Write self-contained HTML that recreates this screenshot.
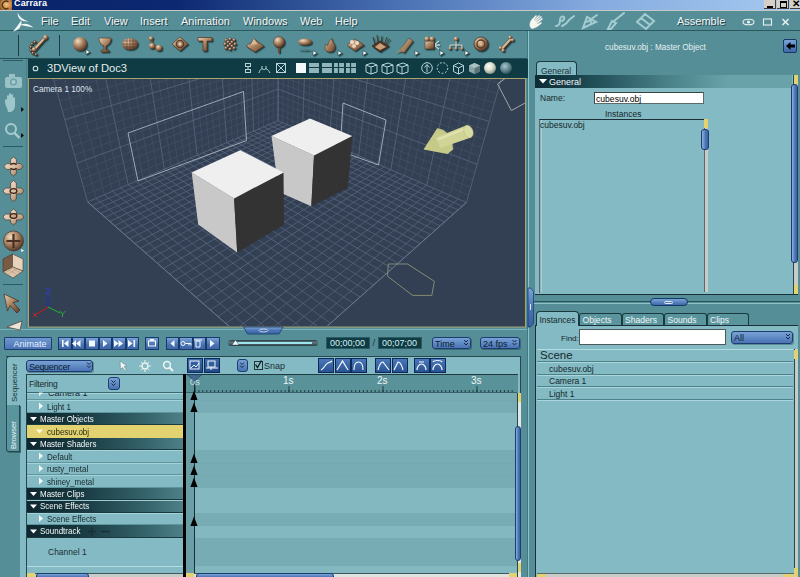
<!DOCTYPE html><html><head><meta charset="utf-8"><style>*{margin:0;padding:0;box-sizing:border-box}
html,body{width:800px;height:577px;overflow:hidden;background:#558e97;font-family:"Liberation Sans",sans-serif}
.a{position:absolute}
.t{position:absolute;white-space:nowrap;line-height:1}
.menu{font-size:11px;color:#f2f6f6;text-shadow:1px 1px 0 #24444a}
.bb{position:absolute;background:linear-gradient(#7ea6d8,#4a74b4 55%,#3d65a6);border:1px solid #163868;border-radius:2px}
.dd{position:absolute;background:linear-gradient(#6f98d0,#4c76b6);border:1px solid #1d3d70;border-radius:3px;box-shadow:1px 1px 0 #2b5a62}
.sm{font-size:8.5px;color:#16282c}
svg{position:absolute;left:0;top:0;overflow:visible}
</style></head><body>
<div class="a" style="left:0px;top:0px;width:800px;height:10px;background:linear-gradient(90deg,#0a246a 0%,#0c2870 22%,#4a72b4 50%,#86ace0 75%,#a6caf0 100%)"></div>
<div class="a" style="left:0px;top:0px;width:12px;height:10px;background:radial-gradient(circle at 55% 45%,#f4c27a,#c08040 60%,#6a4a2a)"></div>
<div class="a" style="left:764px;top:0px;width:12px;height:9px;background:#d4d0c8;border-right:1px solid #404040;border-bottom:1px solid #404040"></div>
<div class="a" style="left:777px;top:0px;width:12px;height:9px;background:#d4d0c8;border-right:1px solid #404040;border-bottom:1px solid #404040"></div>
<div class="a" style="left:790px;top:0px;width:12px;height:9px;background:#d4d0c8;border-right:1px solid #404040;border-bottom:1px solid #404040"></div>
<div class="a" style="left:0px;top:9.5px;width:800px;height:1.8px;background:#c4c8c8"></div>
<div class="a" style="left:0px;top:30px;width:800px;height:1px;background:#2b5960"></div>
<div class="a" style="left:0px;top:58px;width:527px;height:1px;background:#24525a"></div>
<div class="a" style="left:18px;top:35px;width:1px;height:21px;background:#1e3c42"></div>
<div class="a" style="left:59px;top:35px;width:1px;height:21px;background:#1e3c42"></div>
<div class="a" style="left:527px;top:31px;width:1px;height:546px;background:#3f7a82"></div>
<div class="a" style="left:528px;top:31px;width:1px;height:546px;background:#8cc4cc"></div>
<div class="a" style="left:26px;top:59px;width:1px;height:270px;background:#4a8088"></div>
<div class="a" style="left:3px;top:60px;width:20px;height:1px;background:#2a5a62"></div>
<div class="a" style="left:3px;top:146px;width:20px;height:1px;background:#2a5a62"></div>
<div class="a" style="left:3px;top:284px;width:20px;height:1px;background:#2a5a62"></div>
<div class="a" style="left:28px;top:59px;width:500px;height:19px;background:#0e3b44"></div>
<div class="a" style="left:0px;top:328.5px;width:527px;height:1px;background:#7ab4bc"></div>
<div class="a" style="left:6px;top:356px;width:515px;height:221px;background:#84bac3;border-top:1px solid #24484e;border-right:1.5px solid #24484e"></div>
<div class="a" style="left:6px;top:405px;width:13.5px;height:172px;background:#558e97"></div>
<div class="a" style="left:6px;top:356px;width:20px;height:49px;background:#84bac3;border:1px solid #24484e;border-right:none;border-bottom:none;border-radius:4px 0 0 0"></div>
<div class="a" style="left:6px;top:405px;width:13.5px;height:47px;background:#5a959e;border:1px solid #24484e;border-top:none;border-radius:0 0 0 3px;box-shadow:1px 1px 0 #3a6a70"></div>
<div class="a" style="left:26px;top:374px;width:157px;height:203px;background:#84bac3;border-left:1px solid #24484e;border-top:1px solid #24484e"></div>
<div class="a" style="left:27px;top:392px;width:156px;height:1px;background:#3a6a72"></div>
<div class="a" style="left:27px;top:392.5px;width:156px;height:7.5px;background:#84bac3;border-bottom:1px solid #5e949c;border-top:1px solid #a4d4da"></div>
<div class="a" style="left:27px;top:400px;width:156px;height:12.5px;background:#84bac3;border-bottom:1px solid #5e949c;border-top:1px solid #a4d4da"></div>
<div class="a" style="left:27px;top:412.5px;width:156px;height:12.5px;background:linear-gradient(90deg,#0e2830 0%,#15353d 30%,#34626a 75%,#4e8088 100%);border-bottom:1px solid #1a3a40"></div>
<div class="a" style="left:27px;top:425px;width:156px;height:12.5px;background:#e2d270"></div>
<div class="a" style="left:27px;top:437.5px;width:156px;height:12.5px;background:linear-gradient(90deg,#0e2830 0%,#15353d 30%,#34626a 75%,#4e8088 100%);border-bottom:1px solid #1a3a40"></div>
<div class="a" style="left:27px;top:450px;width:156px;height:12.5px;background:#84bac3;border-bottom:1px solid #5e949c;border-top:1px solid #a4d4da"></div>
<div class="a" style="left:27px;top:462.5px;width:156px;height:12.5px;background:#84bac3;border-bottom:1px solid #5e949c;border-top:1px solid #a4d4da"></div>
<div class="a" style="left:27px;top:475px;width:156px;height:12.5px;background:#84bac3;border-bottom:1px solid #5e949c;border-top:1px solid #a4d4da"></div>
<div class="a" style="left:27px;top:487.5px;width:156px;height:12.5px;background:linear-gradient(90deg,#0e2830 0%,#15353d 30%,#34626a 75%,#4e8088 100%);border-bottom:1px solid #1a3a40"></div>
<div class="a" style="left:27px;top:500px;width:156px;height:12.5px;background:linear-gradient(90deg,#0e2830 0%,#15353d 30%,#34626a 75%,#4e8088 100%);border-bottom:1px solid #1a3a40"></div>
<div class="a" style="left:27px;top:512.5px;width:156px;height:12.5px;background:#84bac3;border-bottom:1px solid #5e949c;border-top:1px solid #a4d4da"></div>
<div class="a" style="left:27px;top:525px;width:156px;height:12.5px;background:linear-gradient(90deg,#0e2830 0%,#15353d 30%,#34626a 75%,#4e8088 100%);border-bottom:1px solid #1a3a40"></div>
<div class="a" style="left:27px;top:392px;width:156px;height:1px;background:#3a6a72"></div>
<div class="a" style="left:27px;top:500px;width:156px;height:1px;background:#9ccad0"></div>
<div class="a" style="left:27px;top:566px;width:156px;height:1px;background:#b0dce2"></div>
<div class="a" style="left:27px;top:572.5px;width:156px;height:4.5px;background:#c8ccc8;border-top:1px solid #3a5a60"></div>
<div class="a" style="left:27px;top:573px;width:8px;height:4px;background:#e2d270"></div>
<div class="a" style="left:183px;top:374px;width:3px;height:203px;background:#000"></div>
<div class="a" style="left:186px;top:374px;width:332px;height:19px;background:#5a9299;border-top:1.5px solid #1e3a40"></div>
<div class="a" style="left:186px;top:393px;width:331px;height:19.5px;background:#77acb5"></div>
<div class="a" style="left:186px;top:412.5px;width:331px;height:37.5px;background:#83b8c1"></div>
<div class="a" style="left:186px;top:450px;width:331px;height:37.5px;background:#77acb5"></div>
<div class="a" style="left:186px;top:487.5px;width:331px;height:25.5px;background:#83b8c1"></div>
<div class="a" style="left:186px;top:513px;width:331px;height:13px;background:#77acb5"></div>
<div class="a" style="left:186px;top:526px;width:331px;height:11.5px;background:#83b8c1"></div>
<div class="a" style="left:186px;top:537.5px;width:331px;height:28.0px;background:#77acb5"></div>
<div class="a" style="left:186px;top:565.5px;width:331px;height:7.0px;background:#83b8c1"></div>
<div class="a" style="left:186px;top:400px;width:331px;height:1px;background:#74a8b0"></div>
<div class="a" style="left:186px;top:462.5px;width:331px;height:1px;background:#74a8b0"></div>
<div class="a" style="left:186px;top:475px;width:331px;height:1px;background:#74a8b0"></div>
<div class="a" style="left:186px;top:393px;width:8.5px;height:180px;background:#6a9fa7"></div>
<div class="a" style="left:193.5px;top:380px;width:1.2px;height:193px;background:#1a3034"></div>
<div class="a" style="left:517px;top:393px;width:4px;height:184px;background:#e4e8e4;border-left:1px solid #24484e"></div>
<div class="a" style="left:517.5px;top:393px;width:3.5px;height:9px;background:#e2d270"></div>
<div class="a" style="left:517.5px;top:563px;width:3.5px;height:9px;background:#e2d270"></div>
<div class="a" style="left:186px;top:572.5px;width:331px;height:4.5px;background:#dfe3df;border-top:1px solid #3a5a60"></div>
<div class="a" style="left:186px;top:573px;width:8px;height:4px;background:#e2d270"></div>
<div class="a" style="left:509px;top:573px;width:8px;height:4px;background:#e2d270"></div>
<div class="a" style="left:535.5px;top:61px;width:41.5px;height:15px;background:#84bac3;border:1px solid #1a3a40;border-bottom:none;border-radius:4px 4px 0 0"></div>
<div class="a" style="left:535px;top:75px;width:263px;height:220px;background:#84bac3;border-bottom:1.5px solid #1a3036"></div>
<div class="a" style="left:535px;top:75px;width:257px;height:13px;background:linear-gradient(90deg,#0e2c34 0%,#16404a 15%,#4e868e 55%,#6aa2aa 75%,#6aa2aa 100%)"></div>
<div class="a" style="left:594px;top:92px;width:110px;height:12px;background:#fff;border:1px solid #5a6a6a;border-top-color:#3a4444;border-left-color:#3a4444"></div>
<div class="a" style="left:539px;top:119px;width:169px;height:174px;border-left:1.5px solid #5a6a6a;border-top:1.5px solid #1a3036"></div>
<div class="a" style="left:540.5px;top:120px;width:1px;height:172px;background:#b8c8c8"></div>
<div class="a" style="left:703.5px;top:119px;width:4.5px;height:173px;background:#c8ccc8;border-left:1px solid #5a6a6a"></div>
<div class="a" style="left:703.5px;top:119px;width:4.5px;height:9px;background:#e2d270"></div>
<div class="a" style="left:793px;top:75px;width:5px;height:219px;background:#c8ccc8;border-left:1px solid #24484e"></div>
<div class="a" style="left:793.5px;top:75px;width:4.5px;height:9px;background:#e2d270"></div>
<div class="a" style="left:793.5px;top:285px;width:4.5px;height:8.5px;background:#e2d270"></div>
<div class="a" style="left:529px;top:301px;width:271px;height:1px;background:#2a5058"></div>
<div class="a" style="left:529px;top:302.5px;width:271px;height:1px;background:#8cc2ca"></div>
<div class="a" style="left:579px;top:312.5px;width:42.5px;height:13px;background:#5a959e;border:1px solid #1a3a40;border-bottom:none;border-radius:3px 3px 0 0"></div>
<div class="a" style="left:621.5px;top:312.5px;width:42.5px;height:13px;background:#5a959e;border:1px solid #1a3a40;border-bottom:none;border-radius:3px 3px 0 0"></div>
<div class="a" style="left:664px;top:312.5px;width:42.5px;height:13px;background:#5a959e;border:1px solid #1a3a40;border-bottom:none;border-radius:3px 3px 0 0"></div>
<div class="a" style="left:706.5px;top:312.5px;width:42.5px;height:13px;background:#5a959e;border:1px solid #1a3a40;border-bottom:none;border-radius:3px 3px 0 0"></div>
<div class="a" style="left:535px;top:325px;width:263px;height:252px;background:#84bac3;border-left:1.5px solid #1a3036;border-top:1px solid #1a3036"></div>
<div class="a" style="left:535.5px;top:311px;width:43px;height:15px;background:#84bac3;border:1px solid #1a3a40;border-bottom:none;border-radius:4px 4px 0 0"></div>
<div class="a" style="left:579px;top:329px;width:146.5px;height:15.5px;background:#fff;border:1px solid #4a5a5a"></div>
<div class="a" style="left:536.5px;top:349px;width:256px;height:1px;background:#b0dce2"></div>
<div class="a" style="left:536.5px;top:350px;width:256px;height:12px;border-bottom:1px solid #4e8088;box-shadow:0 1px 0 #a8d6dc"></div>
<div class="a" style="left:536.5px;top:362px;width:256px;height:12.5px;border-bottom:1px solid #4e8088;box-shadow:0 1px 0 #a8d6dc"></div>
<div class="a" style="left:536.5px;top:374.5px;width:256px;height:12.5px;border-bottom:1px solid #4e8088;box-shadow:0 1px 0 #a8d6dc"></div>
<div class="a" style="left:536.5px;top:387px;width:256px;height:12.5px;border-bottom:1px solid #4e8088;box-shadow:0 1px 0 #a8d6dc"></div>
<div class="a" style="left:793.5px;top:349px;width:4.5px;height:228px;background:#c8ccc8;border-left:1px solid #24484e"></div>
<div class="a" style="left:793.5px;top:350px;width:4.5px;height:8.5px;background:#e2d270"></div>
<div class="a" style="left:793.5px;top:568px;width:4.5px;height:9px;background:#e2d270"></div>
<div class="a" style="left:536.5px;top:573px;width:257px;height:4px;background:#c8ccc8;border-top:1px solid #5a6a6a"></div>
<div class="a" style="left:536.5px;top:573.5px;width:9px;height:3.5px;background:#e2d270"></div>
<div class="a" style="left:783px;top:573.5px;width:10px;height:3.5px;background:#e2d270"></div>
<svg width="800" height="577" viewBox="0 0 800 577"><defs>
<radialGradient id="tan" cx="35%" cy="30%" r="75%"><stop offset="0" stop-color="#f0dcc4"/><stop offset="0.45" stop-color="#b08866"/><stop offset="1" stop-color="#4e3222"/></radialGradient>
<linearGradient id="tanl" x1="0" y1="0" x2="1" y2="1"><stop offset="0" stop-color="#e8d0b4"/><stop offset="0.5" stop-color="#a8805e"/><stop offset="1" stop-color="#5a3c28"/></linearGradient>
<radialGradient id="pearl" cx="40%" cy="35%" r="70%"><stop offset="0" stop-color="#ffffff"/><stop offset="0.5" stop-color="#d8dcc8"/><stop offset="1" stop-color="#7a8a80"/></radialGradient>
<radialGradient id="blueb" cx="40%" cy="35%" r="70%"><stop offset="0" stop-color="#a8c4cc"/><stop offset="0.6" stop-color="#5a8088"/><stop offset="1" stop-color="#2a4a52"/></radialGradient>
<linearGradient id="btn" x1="0" y1="0" x2="0" y2="1"><stop offset="0" stop-color="#7ea6d8"/><stop offset="0.5" stop-color="#4a74b4"/><stop offset="1" stop-color="#3a62a2"/></linearGradient>
<linearGradient id="hdr" x1="0" y1="0" x2="1" y2="0"><stop offset="0" stop-color="#0f2f38"/><stop offset="0.25" stop-color="#163e48"/><stop offset="0.75" stop-color="#5e949c"/><stop offset="1" stop-color="#6aa2aa"/></linearGradient>
</defs><filter id="ds" x="-30%" y="-30%" width="160%" height="160%"><feDropShadow dx="1.2" dy="1.2" stdDeviation="0.7" flood-color="#102024" flood-opacity="0.75"/></filter><g filter="url(#ds)"><g stroke="#3a2a20" stroke-width="0.5"><circle cx="35.9" cy="54.4" r="1.3" fill="url(#tan)"/><circle cx="32.8" cy="53.0" r="1.3" fill="url(#tan)"/><circle cx="30.9" cy="50.2" r="1.3" fill="url(#tan)"/><circle cx="30.6" cy="46.9" r="1.3" fill="url(#tan)"/><circle cx="32.0" cy="43.8" r="1.3" fill="url(#tan)"/><circle cx="34.8" cy="41.9" r="1.3" fill="url(#tan)"/></g><path d="M35 49L44 39" stroke="#4a3020" stroke-width="3.6" stroke-linecap="round"/><path d="M35 48.5L44 38.5" stroke="#d8b898" stroke-width="2.4" stroke-linecap="round"/><circle cx="45.5" cy="37.5" r="2.4" fill="url(#tan)"/><circle cx="34" cy="49.5" r="2.2" fill="url(#tan)"/><circle cx="80" cy="44" r="7" fill="url(#tan)"/><path d="M86 49.5L90 52L86 54.5Z" fill="#fff" stroke="#1a3a40" stroke-width="0.6"/><path d="M99 38h12c0 5-3 7-5 8v4h3v2h-8v-2h3v-4c-2-1-5-3-5-8z" fill="url(#tanl)" stroke="#4a3020" stroke-width="0.6"/><ellipse cx="130" cy="44" rx="8" ry="6" fill="url(#tan)"/><path d="M122 44h16M123.5 41h13M123.5 47h13M127 38.5v11M130 38v12M133 38.5v11" stroke="#5a3a28" stroke-width="0.6"/><path d="M151 38L152 46L158 48" stroke="#7a5a40" stroke-width="2.2" fill="none"/><circle cx="151" cy="38.5" r="2.2" fill="url(#tan)"/><circle cx="152" cy="46" r="3" fill="url(#tan)"/><circle cx="159" cy="48" r="3.2" fill="url(#tan)"/><path d="M172 44L180 37L188 44L180 51Z" fill="url(#tanl)" stroke="#4a3020" stroke-width="0.6"/><circle cx="180" cy="44" r="3.6" fill="none" stroke="#5a3a28" stroke-width="1.4"/><circle cx="180" cy="44" r="1.5" fill="#e8d0b8"/><path d="M198 37.5h14v3.5h-5v10h-4v-10h-5z" fill="url(#tanl)" stroke="#4a3020" stroke-width="0.7"/><circle cx="230" cy="44" r="1.5" fill="url(#tan)" stroke="#4a3020" stroke-width="0.3"/><circle cx="226" cy="40" r="1.5" fill="url(#tan)" stroke="#4a3020" stroke-width="0.3"/><circle cx="230" cy="39" r="1.5" fill="url(#tan)" stroke="#4a3020" stroke-width="0.3"/><circle cx="234" cy="40" r="1.5" fill="url(#tan)" stroke="#4a3020" stroke-width="0.3"/><circle cx="225" cy="44" r="1.5" fill="url(#tan)" stroke="#4a3020" stroke-width="0.3"/><circle cx="235" cy="44" r="1.5" fill="url(#tan)" stroke="#4a3020" stroke-width="0.3"/><circle cx="226" cy="48" r="1.5" fill="url(#tan)" stroke="#4a3020" stroke-width="0.3"/><circle cx="230" cy="49" r="1.5" fill="url(#tan)" stroke="#4a3020" stroke-width="0.3"/><circle cx="234" cy="48" r="1.5" fill="url(#tan)" stroke="#4a3020" stroke-width="0.3"/><circle cx="228" cy="42" r="1.5" fill="url(#tan)" stroke="#4a3020" stroke-width="0.3"/><circle cx="232" cy="46" r="1.5" fill="url(#tan)" stroke="#4a3020" stroke-width="0.3"/><circle cx="232" cy="42" r="1.5" fill="url(#tan)" stroke="#4a3020" stroke-width="0.3"/><circle cx="228" cy="46" r="1.5" fill="url(#tan)" stroke="#4a3020" stroke-width="0.3"/><path d="M246 46L255 40L264 46L255 52Z" fill="url(#tanl)" stroke="#4a3020" stroke-width="0.6"/><path d="M250 45L254 38L258 44" fill="#d8b898" stroke="#5a3a28" stroke-width="0.5"/><path d="M279 46v7" stroke="#6a4a34" stroke-width="2"/><circle cx="279" cy="42" r="5.5" fill="url(#tan)" stroke="#4a3020" stroke-width="0.5"/><ellipse cx="305" cy="42" rx="7" ry="3.5" fill="url(#tan)"/><ellipse cx="305" cy="50" rx="6" ry="1.2" fill="#4a7a80" opacity="0.7"/><path d="M313 50.5L317 53L313 55.5Z" fill="#fff" stroke="#1a3a40" stroke-width="0.6"/><path d="M330 52c-5 0-6-4-4-8c1 2 2 2 2 1c0-3 2-5 4-7c-1 3 3 5 3 9c0 3-2 5-5 5z" fill="url(#tanl)" stroke="#4a3020" stroke-width="0.5"/><path d="M338 50.5L342 53L338 55.5Z" fill="#fff" stroke="#1a3a40" stroke-width="0.6"/><path d="M347 45L355 39L364 45L355 51Z" fill="url(#tanl)" stroke="#4a3020" stroke-width="0.6"/><circle cx="352" cy="42" r="2" fill="#f0dcc4"/><circle cx="357" cy="43" r="2" fill="#f0dcc4"/><circle cx="354" cy="46" r="2" fill="#e8d0b8"/><path d="M363 50.5L367 53L363 55.5Z" fill="#fff" stroke="#1a3a40" stroke-width="0.6"/><path d="M372 46L380 41L389 46L380 52Z" fill="#5a3a28" stroke="#2a1a10" stroke-width="0.6"/><path d="M375 45l-2-8M378 44l-1-9M381 44l1-8M384 45l3-8M386 45l4-6" stroke="#3a2a20" stroke-width="0.8"/><path d="M375 47L380 43L386 47L380 50Z" fill="#c9a07e"/><path d="M400 50L409 38L413 41L404 53Z" fill="url(#tanl)" stroke="#4a3020" stroke-width="0.5"/><path d="M396 53L403 46L405 51Z" fill="#a88868" opacity="0.7"/><path d="M415 50.5L419 53L415 55.5Z" fill="#fff" stroke="#1a3a40" stroke-width="0.6"/><rect x="425" y="41" width="9" height="8" fill="url(#tanl)" stroke="#4a3020" stroke-width="0.5"/><circle cx="427" cy="39" r="2.5" fill="url(#tan)"/><circle cx="432" cy="39" r="2.5" fill="url(#tan)"/><path d="M435 44l4-3M435 45h5M435 46l4 3" stroke="#fff" stroke-width="0.8"/><path d="M440 50.5L444 53L440 55.5Z" fill="#fff" stroke="#1a3a40" stroke-width="0.6"/><circle cx="456" cy="39" r="2.3" fill="url(#tan)"/><path d="M456 41v4M450 45h12M450 45v3M456 45v3M462 45v3" stroke="#e8d8c8" stroke-width="0.8"/><circle cx="450" cy="48.5" r="1.5" fill="url(#tan)"/><circle cx="456" cy="48.5" r="1.5" fill="url(#tan)"/><circle cx="462" cy="48.5" r="1.5" fill="url(#tan)"/><path d="M465 50.5L469 53L465 55.5Z" fill="#fff" stroke="#1a3a40" stroke-width="0.6"/><circle cx="481" cy="44" r="7" fill="url(#tan)" stroke="#3a2a20" stroke-width="0.6"/><circle cx="481" cy="44" r="4" fill="none" stroke="#5a3a28" stroke-width="1.4"/><circle cx="481" cy="44" r="1.6" fill="#d8b898"/><path d="M502 49L511 39" stroke="#4a3020" stroke-width="3.4" stroke-linecap="round"/><path d="M502 48.5L511 38.5" stroke="#d8b898" stroke-width="2.2"/><circle cx="510" cy="37.5" r="1.8" fill="url(#tan)"/><circle cx="512.5" cy="40" r="1.8" fill="url(#tan)"/><circle cx="500.5" cy="48" r="1.8" fill="url(#tan)"/><circle cx="503" cy="50.5" r="1.8" fill="url(#tan)"/></g><path d="M8.5 2A3.8 3.8 0 1 0 8.5 8" fill="none" stroke="#4a3018" stroke-width="1.3"/><g fill="#eef6f6"><path d="M17.5 12.5Q17 22 28.5 21.5Q20.5 19 17.5 12.5Z"/><path d="M13 31.5Q22.5 29.5 21.5 20Q17.5 26 13 31.5Z"/><path d="M33.5 27.5Q26.5 21.5 20 25Q27 26 33.5 27.5Z"/></g><path d="M530 27c-1-3 0-6 2-8l4-4 1 1-3 4 5-5 1 1-5 5 6-5 1 1-6 5 6-4 1 1-6 5 4-2 1 1c-3 3-6 5-10 6z" fill="#f8f8ee" stroke="#9ab" stroke-width="0.3"/><g fill="none" stroke="#a8d0d4" stroke-width="2" stroke-linecap="round" opacity="0.95"><path d="M556 26c3 0 4-3 4-6c0-3 2-4 4-3c1 1 0 3-2 4M562 26c3-1 5-3 7-6l5-4"/><path d="M583 28l4-11l9 5zM587 22l10-7M590 19l1 4"/><path d="M608 29l4-8l4 2-5 6zM614 21l10-8"/><path d="M637 22l8-8l9 7-8 8zM641 18l9 7M645 14l9 7"/></g><ellipse cx="748.5" cy="22" rx="5.5" ry="2.8" fill="none" stroke="#e8f0f0" stroke-width="1.1"/><circle cx="748.5" cy="22" r="1.6" fill="#e8f0f0"/><rect x="763.5" y="19" width="8" height="6" fill="none" stroke="#e8f0f0" stroke-width="1.1"/><path d="M782.5 19l6 6M788.5 19l-6 6" stroke="#e8f0f0" stroke-width="1.5"/><g fill="#a6ccd0" opacity="0.85"><rect x="5" y="77" width="17" height="11" rx="2"/><rect x="9" y="74" width="6" height="4"/></g><circle cx="13.5" cy="82" r="3.6" fill="#6aa2aa"/><circle cx="13.5" cy="82" r="2" fill="#a6ccd0"/><path d="M7 108c-2-3-2-6-2-8 0-1 2-1 2 0v3l0-7c0-1 2-1 2 0v6-8c0-1 2-1 2 0v8-7c0-1 2-1 2 0v8-5c0-1 2-1 2 0v8c0 3-2 5-4 6h-3z" fill="#a6ccd0" opacity="0.9"/><path d="M21 107l3 2.5-3 2.5z" fill="#111"/><circle cx="11" cy="129" r="5" fill="none" stroke="#a6ccd0" stroke-width="2"/><path d="M14.5 133l5 5" stroke="#a6ccd0" stroke-width="2.4"/><path d="M21 133l3 2.5-3 2.5z" fill="#111"/><linearGradient id="tanl2" x1="0" y1="0" x2="1" y2="1"><stop offset="0" stop-color="#f4e4d0"/><stop offset="0.55" stop-color="#d8bca0"/><stop offset="1" stop-color="#7a5a40"/></linearGradient><path d="M10.6 163.6L10.6 159.5L13.5 157.0L16.4 159.5L16.4 163.6L20.5 163.6L23.0 166.5L20.5 169.4L16.4 169.4L16.4 173.5L13.5 176.0L10.6 173.5L10.6 169.4L6.5 169.4L4.0 166.5L6.5 163.6Z" fill="url(#tanl2)" stroke="#3a2a20" stroke-width="0.6"/><path d="M10.5 165c1-2 5-2 6 0M10.5 168c1 2 5 2 6 0" stroke="#3a2418" stroke-width="1.3" fill="none"/><path d="M10.6 188.1L10.6 183.0L13.5 180.5L16.4 183.0L16.4 188.1L21.5 188.1L24.0 191L21.5 193.9L16.4 193.9L16.4 199.0L13.5 201.5L10.6 199.0L10.6 193.9L5.5 193.9L3.0 191L5.5 188.1Z" fill="url(#tanl2)" stroke="#3a2a20" stroke-width="0.6"/><ellipse cx="13.5" cy="191" rx="3.4" ry="2.3" fill="none" stroke="#3a2418" stroke-width="1.3"/><path d="M10.6 214.1L10.6 211.5L13.5 209L16.4 211.5L16.4 214.1L21.5 214.1L24.0 217L21.5 219.9L16.4 219.9L16.4 222.5L13.5 225L10.6 222.5L10.6 219.9L5.5 219.9L3.0 217L5.5 214.1Z" fill="url(#tanl2)" stroke="#3a2a20" stroke-width="0.6"/><ellipse cx="13.5" cy="216" rx="3.4" ry="2.3" fill="#c8a888" stroke="#3a2418" stroke-width="1.3"/><circle cx="13.5" cy="241" r="10" fill="url(#tan)" stroke="#3a2a20" stroke-width="0.6"/><path d="M13.5 234v14M6.5 241h14" stroke="#4a3020" stroke-width="2.2"/><path d="M21 249l3 1.5-2.5 1.5z" fill="#fff"/><g stroke="#3a2a20" stroke-width="0.5"><path d="M3 259L12.5 254V267L3 272Z" fill="#7a5a42"/><path d="M12.5 254L23 259V271L12.5 267Z" fill="#e8d2bc"/><path d="M3 272L12.5 267L23 271L13 278Z" fill="#dcc2a8"/></g><path d="M7.5 269.5L17.5 274.5M11 268L20 272.5M8 274.5L17.5 268.5M5 273L15 266.5" stroke="#b09478" stroke-width="0.5"/><path d="M4 294l15 7-6 1.5 7 7.5-3 3-7-7.5-2.5 5.5z" fill="url(#tanl)" stroke="#3a2a20" stroke-width="0.7"/><path d="M7 327l15-6-2 9z" fill="#f0e4d8" stroke="#3a2a20" stroke-width="0.6"/><circle cx="35.5" cy="68.5" r="2.3" fill="none" stroke="#c8e0e0" stroke-width="1.1"/><g stroke="#b8d4d8" fill="none" stroke-width="1"><rect x="245.5" y="63.5" width="5" height="3"/><path d="M248 66.5v3"/><rect x="245.5" y="69.5" width="5" height="3"/><path d="M259 73c1-4 3-5 5-3c2-2 4-1 6 3M262 69v-3M266 69v-3"/><rect x="276.5" y="63.5" width="9" height="9"/><path d="M276.5 63.5l9 9M285.5 63.5l-9 9"/></g><rect x="296" y="63" width="10" height="10" fill="#f4f8f8"/><rect x="309" y="63" width="10" height="10" fill="#8fb4ba"/><rect x="322" y="63" width="10" height="10" fill="#8fb4ba"/><rect x="334" y="63" width="10" height="10" fill="#8fb4ba"/><rect x="346" y="63" width="10" height="10" fill="#8fb4ba"/><path d="M309 67.5h10M322 67.5h10" stroke="#0e3b44" stroke-width="1.2"/><path d="M334 67.5h10M338.5 63v10M346 67.5h10M350.5 63v10" stroke="#0e3b44" stroke-width="1.2"/><path d="M322 68h10v5h-10z" fill="#0e3b44" opacity="0"/><g fill="none" stroke="#b8d4d8" stroke-width="1"><path d="M366 65l6-2 5 2v7l-6 2-5-2z M366 65l5 2 6-2M371 67v7"/></g><g fill="none" stroke="#b8d4d8" stroke-width="1"><path d="M382 65l6-2 5 2v7l-6 2-5-2z M382 65l5 2 6-2M387 67v7"/></g><g fill="none" stroke="#b8d4d8" stroke-width="1"><path d="M397 65l6-2 5 2v7l-6 2-5-2z M397 65l5 2 6-2M402 67v7"/></g><g fill="none" stroke="#b8d4d8" stroke-width="1"><circle cx="427" cy="68" r="5.3"/><path d="M427 72v-7M424.5 67.5l2.5-3 2.5 3"/><circle cx="442.5" cy="68" r="5.3" stroke-dasharray="2 1.6"/><path d="M453.5 65.5l5-2.5 5 2.5v6l-5 2.5-5-2.5zM453.5 65.5l5 2.5 5-2.5M458.5 68v6"/></g><path d="M469 65.5l5.5-2.5 5.5 2.5v6l-5.5 2.5-5.5-2.5z" fill="#8aa4a8"/><path d="M474.5 68l5.5-2.5v6l-5.5 2.5z" fill="#5a7478"/><path d="M469 65.5l5.5-2.5 5.5 2.5-5.5 2.5z" fill="#a8c0c4"/><circle cx="490" cy="68" r="6" fill="url(#pearl)"/><circle cx="506" cy="68" r="6" fill="url(#blueb)"/><defs><clipPath id="vc"><rect x="29" y="79" width="496" height="247"/></clipPath></defs><rect x="28.5" y="78.5" width="497" height="248.5" fill="#333f53" stroke="#a8a470"/><g clip-path="url(#vc)" fill="none"><path d="M273.3 122.7L272.5 -118.9M282.8 122.7L285.0 -118.8M268.5 124.7L266.1 -119.0M287.6 124.8L291.4 -118.7M263.6 126.8L259.6 -119.1M292.5 126.9L297.9 -118.7M258.6 129.0L252.9 -119.2M297.5 129.1L304.6 -118.7M248.3 133.3L239.0 -119.5M307.7 133.6L318.5 -118.6M243.1 135.6L231.9 -119.6M313.0 135.8L325.7 -118.5M237.7 137.9L224.5 -119.7M318.3 138.2L333.0 -118.5M232.2 140.2L216.9 -119.9M323.7 140.5L340.6 -118.4M221.0 145.0L201.2 -120.1M334.9 145.4L356.2 -118.4M215.2 147.5L193.0 -120.3M340.7 147.9L364.3 -118.3M209.3 150.0L184.6 -120.4M346.6 150.4L372.7 -118.3M203.2 152.6L176.0 -120.6M352.5 153.0L381.2 -118.2M190.8 157.9L158.1 -120.9M364.8 158.4L399.0 -118.1M184.4 160.6L148.7 -121.0M371.2 161.1L408.3 -118.0M177.9 163.4L139.1 -121.2M377.6 163.9L417.8 -118.0M171.2 166.2L129.1 -121.3M384.2 166.8L427.6 -117.9M157.5 172.1L108.4 -121.7M397.8 172.7L448.0 -117.8M150.4 175.1L97.6 -121.9M404.8 175.7L458.6 -117.8M143.1 178.2L86.4 -122.1M411.9 178.8L469.6 -117.7M135.7 181.4L74.9 -122.3M419.2 182.0L480.9 -117.6M120.4 187.9L50.7 -122.7M434.3 188.5L504.5 -117.5M112.5 191.3L38.0 -122.9M442.1 191.9L516.9 -117.4M104.4 194.8L24.9 -123.1M450.0 195.4L529.6 -117.3M96.1 198.3L11.3 -123.4M458.1 198.9L542.8 -117.3M278.0 114.5L85.6 194.5M278.0 114.5L468.5 195.2M278.1 108.3L83.5 186.9M278.1 108.3L470.6 187.7M278.1 102.0L81.3 179.2M278.1 102.0L472.7 180.1M278.1 95.6L79.1 171.3M278.1 95.6L474.9 172.3M278.1 82.4L74.6 154.9M278.1 82.4L479.5 156.1M278.2 75.7L72.2 146.4M278.2 75.7L481.8 147.7M278.2 68.8L69.8 137.7M278.2 68.8L484.3 139.2M278.2 61.8L67.3 128.8M278.2 61.8L486.7 130.4M278.2 47.5L62.2 110.4M278.2 47.5L491.8 112.3M278.3 40.1L59.6 100.8M278.3 40.1L494.5 102.9M278.3 32.6L56.8 91.0M278.3 32.6L497.2 93.2M278.3 25.0L54.1 81.0M278.3 25.0L500.0 83.3M278.4 9.3L48.3 60.1M278.4 9.3L505.8 62.8M278.4 1.3L45.2 49.2M278.4 1.3L508.8 52.1M278.4 -6.9L42.2 38.1M278.4 -6.9L511.9 41.2M278.4 -15.3L39.0 26.6M278.4 -15.3L515.0 29.9M278.5 -32.5L32.3 2.8M278.5 -32.5L521.6 6.5M278.5 -41.3L28.9 -9.7M278.5 -41.3L525.1 -5.7M278.5 -50.3L25.3 -22.5M278.5 -50.3L528.6 -18.3M278.6 -59.5L21.7 -35.7M278.6 -59.5L532.2 -31.2M278.6 -78.5L14.0 -63.2M278.6 -78.5L539.8 -58.2M278.7 -88.3L10.0 -77.6M278.7 -88.3L543.8 -72.2M278.7 -98.2L5.9 -92.5M278.7 -98.2L547.9 -86.8M278.7 -108.4L1.7 -107.8M278.7 -108.4L552.1 -101.7" stroke="#44536a" stroke-width="0.62"/><path d="M278.0 120.7L278.8 -118.8M278.0 120.7L278.8 -118.8M253.5 131.1L246.1 -119.4M302.5 131.3L311.5 -118.6M226.6 142.6L209.2 -120.0M329.3 142.9L348.3 -118.4M197.1 155.2L167.2 -120.7M358.6 155.7L390.0 -118.2M164.4 169.1L118.9 -121.5M390.9 169.7L437.6 -117.9M128.2 184.6L63.0 -122.5M426.7 185.2L492.5 -117.6M87.6 201.9L-2.7 -123.6M466.4 202.5L556.5 -117.2M278.1 89.1L76.9 163.2M278.1 89.1L477.2 164.3M278.2 54.7L64.8 119.7M278.2 54.7L489.3 121.5M278.3 17.2L51.2 70.7M278.3 17.2L502.8 73.2M278.5 -23.8L35.7 14.9M278.5 -23.8L518.3 18.4M278.6 -68.9L17.9 -49.2M278.6 -68.9L536.0 -44.5M278.8 -118.8L-2.7 -123.6M278.8 -118.8L556.5 -117.2" stroke="#58677d" stroke-width="0.8"/><path d="M273.3 122.7L462.3 206.2M282.8 122.7L91.9 205.6M268.5 124.7L458.1 209.9M287.6 124.8L96.2 209.4M263.6 126.8L453.7 213.8M292.5 126.9L100.6 213.4M258.6 129.0L449.3 217.7M297.5 129.1L105.2 217.3M248.3 133.3L440.1 225.9M307.7 133.6L114.6 225.6M243.1 135.6L435.3 230.2M313.0 135.8L119.5 229.9M237.7 137.9L430.4 234.5M318.3 138.2L124.5 234.3M232.2 140.2L425.4 239.0M323.7 140.5L129.6 238.8M221.0 145.0L414.9 248.3M334.9 145.4L140.3 248.2M215.2 147.5L409.5 253.1M340.7 147.9L145.8 253.1M209.3 150.0L403.9 258.1M346.6 150.4L151.5 258.1M203.2 152.6L398.1 263.2M352.5 153.0L157.4 263.2M190.8 157.9L386.2 273.8M364.8 158.4L169.5 274.0M184.4 160.6L379.9 279.4M371.2 161.1L175.9 279.5M177.9 163.4L373.5 285.1M377.6 163.9L182.4 285.3M171.2 166.2L366.8 291.0M384.2 166.8L189.1 291.2M157.5 172.1L353.0 303.3M397.8 172.7L203.2 303.5M150.4 175.1L345.7 309.8M404.8 175.7L210.5 310.0M143.1 178.2L338.2 316.4M411.9 178.8L218.1 316.6M135.7 181.4L330.5 323.3M419.2 182.0L225.9 323.5M120.4 187.9L314.3 337.7M434.3 188.5L242.2 337.9M112.5 191.3L305.7 345.3M442.1 191.9L250.8 345.4M104.4 194.8L296.9 353.1M450.0 195.4L259.7 353.2M96.1 198.3L287.8 361.2M458.1 198.9L268.8 361.3" stroke="#56667d" stroke-width="0.75"/><path d="M278.0 120.7L466.4 202.5M278.0 120.7L87.6 201.9M253.5 131.1L444.7 221.8M302.5 131.3L109.8 221.4M226.6 142.6L420.2 243.6M329.3 142.9L134.9 243.5M197.1 155.2L392.2 268.4M358.6 155.7L163.4 268.5M164.4 169.1L360.0 297.1M390.9 169.7L196.0 297.3M128.2 184.6L322.5 330.4M426.7 185.2L233.9 330.6M87.6 201.9L278.3 369.6M466.4 202.5L278.3 369.6" stroke="#5a6a81" stroke-width="0.8"/><path d="M87.6 201.9L278.3 369.6M466.4 202.5L278.3 369.6" stroke="#68778d" stroke-width="1"/><path d="M128 133L243.5 91.5L246.5 140.5L138 181Z" fill="none" stroke="#aab6c0" stroke-width="0.9"/><path d="M343 103L386 120L378.5 165L340 151Z" fill="none" stroke="#aab6c0" stroke-width="0.9"/><path d="M505.8 78L497.6 84L511.3 110.5L527 102" fill="none" stroke="#aeb2b0" stroke-width="0.9"/><path d="M388.3 264L407.5 264L434.4 281.3L431.8 295.4L412.6 295.4L387.5 276.2Z" fill="none" stroke="#8c9478" stroke-width="0.9"/><polygon points="271.5,136.0 314.0,155.5 311.3,206.2 278.8,192.0" fill="#c8c8c8"/><polygon points="314.0,155.5 352.2,136.0 347.8,188.0 311.3,206.2" fill="#333333"/><polygon points="271.5,136.0 310.0,118.6 352.2,136.0 314.0,155.5" fill="#efefef"/><polygon points="191.7,172.4 234.1,198.4 237.2,252.5 198.2,224.4" fill="#c8c8c8"/><polygon points="234.1,198.4 283.5,172.4 284.0,224.4 237.2,252.5" fill="#333333"/><polygon points="191.7,172.4 240.3,150.3 283.5,172.4 234.1,198.4" fill="#efefef"/><path d="M423.5 149.5L437 128.5Q451 129.5 453 149.5L447.5 154Z" fill="#c6ca88"/><path d="M437 128.5Q451 129.5 453 149.5" fill="none" stroke="#b2b676" stroke-width="0.8"/><path d="M435.5 137.5L466 125.5L471 137.5L440.5 148Z" fill="#d0d496"/><path d="M437.5 139.5L467 128" stroke="#e2e6b4" stroke-width="2.2" opacity="0.9"/><ellipse cx="468.5" cy="131.5" rx="4.4" ry="6.4" transform="rotate(-22 468.5 131.5)" fill="#d8dca2" stroke="#b8bc7c" stroke-width="0.5"/></g><path d="M48 307V296" stroke="#2030c0" stroke-width="1.3"/><path d="M46 289h4l-4 5h4" stroke="#2a3ad0" stroke-width="1" fill="none"/><path d="M48 307L37 314" stroke="#b02020" stroke-width="1.3"/><path d="M33 313l4 4M37 313l-4 4" stroke="#c02828" stroke-width="1"/><path d="M48 307L60 313" stroke="#20a030" stroke-width="1.3"/><path d="M60 311l2.5 3 3-3M62.5 314v3" stroke="#28b038" stroke-width="1" fill="none"/><path d="M243.5 327h39.5l-4 7h-31.5z" fill="url(#btn)" stroke="#1d3d70" stroke-width="0.8"/><ellipse cx="263.5" cy="330.5" rx="4.5" ry="1.5" fill="none" stroke="#dde8f4" stroke-width="0.8"/><path d="M528 288h2.5l3 3.5v32l-3 3.5h-2.5z" fill="url(#btn)" stroke="#1d3d70" stroke-width="0.8"/><path d="M530.5 304v6" stroke="#dde8f4" stroke-width="1"/><path d="M120 361l7 5-3 .5 2.5 3.5-1.5 1-2.5-3.5-2 2z" fill="#f0f4f4" stroke="#5a7a80" stroke-width="0.5"/><circle cx="145" cy="366" r="3" fill="none" stroke="#f0f4f0" stroke-width="1.4"/><g stroke="#f0f4f0" stroke-width="1"><path d="M145 360v2M145 370v2M139 366h2M149 366h2M141 362l1.4 1.4M147.6 368.6l1.4 1.4M149 362l-1.4 1.4M142.4 368.6l-1.4 1.4"/></g><circle cx="167" cy="365" r="3.4" fill="none" stroke="#f0f4f4" stroke-width="1.5"/><path d="M169.5 367.5l3.5 3.5" stroke="#f0f4f4" stroke-width="2"/><path d="M39 392.5v3.5l4-3.5z" fill="#f4f8f8"/><path d="M39 402.5v7l4-3.5z" fill="#f4f8f8"/><path d="M30 417.0h7l-3.5 4z" fill="#fff"/><path d="M36 429.5h7l-3.5 4z" fill="#fffbe0"/><path d="M30 442.0h7l-3.5 4z" fill="#fff"/><path d="M39 452.5v7l4-3.5z" fill="#f4f8f8"/><path d="M39 465.0v7l4-3.5z" fill="#f4f8f8"/><path d="M39 477.5v7l4-3.5z" fill="#f4f8f8"/><path d="M30 492.0h7l-3.5 4z" fill="#fff"/><path d="M30 504.5h7l-3.5 4z" fill="#fff"/><path d="M39 515.0v7l4-3.5z" fill="#f4f8f8"/><path d="M30 529.5h7l-3.5 4z" fill="#fff"/><path d="M88 531.5h8M92 527.5v8M101 531.5h9" stroke="#1a3036" stroke-width="1.6"/><path d="M195.0 390v3M198.9 390v3M202.8 390v3M206.8 390v3M210.7 390v3M214.6 390v3M218.5 390v3M222.4 390v3M226.3 390v3M230.2 390v3M234.2 390v3M238.1 390v3M242.0 390v3M245.9 390v3M249.8 390v3M253.8 390v3M257.7 390v3M261.6 390v3M265.5 390v3M269.4 390v3M273.3 390v3M277.2 390v3M281.2 390v3M285.1 390v3M289.0 390v3M292.9 390v3M296.8 390v3M300.8 390v3M304.7 390v3M308.6 390v3M312.5 390v3M316.4 390v3M320.3 390v3M324.2 390v3M328.2 390v3M332.1 390v3M336.0 390v3M339.9 390v3M343.8 390v3M347.8 390v3M351.7 390v3M355.6 390v3M359.5 390v3M363.4 390v3M367.3 390v3M371.2 390v3M375.2 390v3M379.1 390v3M383.0 390v3M386.9 390v3M390.8 390v3M394.8 390v3M398.7 390v3M402.6 390v3M406.5 390v3M410.4 390v3M414.3 390v3M418.2 390v3M422.2 390v3M426.1 390v3M430.0 390v3M433.9 390v3M437.8 390v3M441.8 390v3M445.7 390v3M449.6 390v3M453.5 390v3M457.4 390v3M461.3 390v3M465.2 390v3M469.2 390v3M473.1 390v3M477.0 390v3M480.9 390v3M484.8 390v3M488.8 390v3M492.7 390v3M496.6 390v3M500.5 390v3M504.4 390v3M508.3 390v3M512.2 390v3M195.0 386v7M289.0 386v7M383.0 386v7M477.0 386v7" stroke="#10262a" stroke-width="0.8"/><path d="M186 392.5h331" stroke="#3a6268" stroke-width="1"/><path d="M194 390.5l3.6 9.5h-7.2z" fill="#000"/><path d="M194 402.5l3.6 9.5h-7.2z" fill="#000"/><path d="M194 453.5l3.6 9.5h-7.2z" fill="#000"/><path d="M194 465.5l3.6 9.5h-7.2z" fill="#000"/><path d="M194 477.5l3.6 9.5h-7.2z" fill="#000"/><path d="M194 516.5l3.6 9.5h-7.2z" fill="#000"/><path d="M539 79h8l-4 4.5z" fill="#fff"/></svg>
<div class="t" style="left:14px;top:-1px;font-size:9px;font-weight:bold;letter-spacing:0.15px;color:#fff">Carrara</div><div class="a" style="left:767px;top:6px;width:6px;height:1.6px;background:#000"></div><div class="a" style="left:780px;top:1px;width:7px;height:6.5px;border:1px solid #000;border-top-width:2px"></div><div class="t" style="left:792px;top:-1.5px;font-size:10px;color:#000;font-weight:bold">✕</div><div class="t" style="left:41px;top:16px;font-size:11px;color:#f2f6f6;text-shadow:1px 1px 0 #24444a">File</div><div class="t" style="left:71px;top:16px;font-size:11px;color:#f2f6f6;text-shadow:1px 1px 0 #24444a">Edit</div><div class="t" style="left:104px;top:16px;font-size:11px;color:#f2f6f6;text-shadow:1px 1px 0 #24444a">View</div><div class="t" style="left:140px;top:16px;font-size:11px;color:#f2f6f6;text-shadow:1px 1px 0 #24444a">Insert</div><div class="t" style="left:181px;top:16px;font-size:11px;color:#f2f6f6;text-shadow:1px 1px 0 #24444a">Animation</div><div class="t" style="left:243px;top:16px;font-size:11px;color:#f2f6f6;text-shadow:1px 1px 0 #24444a">Windows</div><div class="t" style="left:300px;top:16px;font-size:11px;color:#f2f6f6;text-shadow:1px 1px 0 #24444a">Web</div><div class="t" style="left:335px;top:16px;font-size:11px;color:#f2f6f6;text-shadow:1px 1px 0 #24444a">Help</div><div class="t" style="left:677px;top:16px;font-size:11px;color:#f2f6f6;text-shadow:1px 1px 0 #24444a">Assemble</div><div class="t" style="left:47px;top:63px;font-size:11.2px;color:#e4ecec">3DView of Doc3</div><div class="t" style="left:33px;top:85.5px;font-size:8.2px;color:#dde4ea">Camera 1 100%</div><div class="a" style="left:4px;top:337px;width:48px;height:13px;background:linear-gradient(#6f98d0,#4a74b4);border:1px solid #1d3d70;border-radius:1px"></div><div class="t" style="left:13.5px;top:339.5px;font-size:9px;color:#e8f0ff">Animate</div><div class="a" style="left:58.0px;top:337px;width:13.5px;height:13px;background:linear-gradient(#7aa2d6,#4872b2 60%,#3e66a6);border:1px solid #173a6a"></div><div class="a" style="left:71.5px;top:337px;width:13.5px;height:13px;background:linear-gradient(#7aa2d6,#4872b2 60%,#3e66a6);border:1px solid #173a6a"></div><div class="a" style="left:85.0px;top:337px;width:13.5px;height:13px;background:linear-gradient(#7aa2d6,#4872b2 60%,#3e66a6);border:1px solid #173a6a"></div><div class="a" style="left:98.5px;top:337px;width:13.5px;height:13px;background:linear-gradient(#7aa2d6,#4872b2 60%,#3e66a6);border:1px solid #173a6a"></div><div class="a" style="left:112.0px;top:337px;width:13.5px;height:13px;background:linear-gradient(#7aa2d6,#4872b2 60%,#3e66a6);border:1px solid #173a6a"></div><div class="a" style="left:125.5px;top:337px;width:13.5px;height:13px;background:linear-gradient(#7aa2d6,#4872b2 60%,#3e66a6);border:1px solid #173a6a"></div><div class="a" style="left:145px;top:337px;width:14px;height:13px;background:linear-gradient(#7aa2d6,#4872b2 60%,#3e66a6);border:1px solid #173a6a"></div><div class="a" style="left:165.5px;top:337px;width:13.6px;height:13px;background:linear-gradient(#7aa2d6,#4872b2 60%,#3e66a6);border:1px solid #173a6a"></div><div class="a" style="left:179.1px;top:337px;width:13.6px;height:13px;background:linear-gradient(#7aa2d6,#4872b2 60%,#3e66a6);border:1px solid #173a6a"></div><div class="a" style="left:192.7px;top:337px;width:13.6px;height:13px;background:linear-gradient(#7aa2d6,#4872b2 60%,#3e66a6);border:1px solid #173a6a"></div><div class="a" style="left:206.3px;top:337px;width:13.6px;height:13px;background:linear-gradient(#7aa2d6,#4872b2 60%,#3e66a6);border:1px solid #173a6a"></div><div class="a" style="left:227.5px;top:339.5px;width:90px;height:6.5px;background:linear-gradient(#2a3e42,#5a7a80 40%,#2a3e42);border-radius:3px"></div><div class="a" style="left:236px;top:342px;width:76px;height:1.5px;background:#9ee6ee"></div><div class="a" style="left:326px;top:336.5px;width:43.5px;height:12px;background:#0e3b44;border:1px solid #2a5a62"></div><div class="t" style="left:330px;top:339px;font-size:9px;color:#d8f0f0">00;00;00</div><div class="t" style="left:372.5px;top:338px;font-size:9.5px;color:#1a3a40">/</div><div class="a" style="left:378px;top:336.5px;width:43.5px;height:12px;background:#0e3b44;border:1px solid #2a5a62"></div><div class="t" style="left:382px;top:339px;font-size:9px;color:#d8f0f0">00;07;00</div><div class="a" style="left:432px;top:336.5px;width:39px;height:12.5px;background:linear-gradient(#78a2d6,#4a74b4);border:1px solid #1d3d70;border-radius:3px;box-shadow:1px 1px 0 #3a6a72"></div><div class="t" style="left:435px;top:339.5px;font-size:9px;color:#0e1e30">Time</div><div class="a" style="left:480px;top:336.5px;width:39.5px;height:12.5px;background:linear-gradient(#78a2d6,#4a74b4);border:1px solid #1d3d70;border-radius:3px;box-shadow:1px 1px 0 #3a6a72"></div><div class="t" style="left:483px;top:339.5px;font-size:9px;color:#0e1e30">24 fps</div><div class="t" style="left:11px;top:401.5px;font-size:8px;color:#1a3036;transform:rotate(-90deg);transform-origin:0 0">Sequencer</div><div class="t" style="left:9.5px;top:449px;font-size:7.6px;color:#e8f4f4;transform:rotate(-90deg);transform-origin:0 0">Browser</div><div class="a" style="left:26px;top:359.5px;width:67px;height:12.5px;background:linear-gradient(#78a2d6,#4a74b4);border:1px solid #1d3d70;border-radius:3px;box-shadow:1px 1px 0 #5a8a92"></div><div class="t" style="left:29px;top:362.5px;font-size:9px;letter-spacing:-0.3px;color:#0e1e30">Sequencer</div><div class="a" style="left:187px;top:358px;width:15.5px;height:14.5px;background:linear-gradient(#3c6aa8,#234a88);border:1px solid #0e2a5a"></div><div class="a" style="left:204px;top:358px;width:15.5px;height:14.5px;background:linear-gradient(#3c6aa8,#234a88);border:1px solid #0e2a5a"></div><div class="a" style="left:237px;top:359px;width:10.5px;height:12.5px;background:linear-gradient(#78a2d6,#4a74b4);border:1px solid #1d3d70;border-radius:3px"></div><div class="a" style="left:254px;top:361px;width:8.5px;height:8.5px;background:#8cbcc4;border:1px solid #20383c"></div><div class="t" style="left:264px;top:362px;font-size:9px;color:#1a3036">Snap</div><div class="a" style="left:318px;top:358px;width:16px;height:15px;background:linear-gradient(#4a78b8,#2a5292);border:1px solid #0e2a5a"></div><div class="a" style="left:334.5px;top:358px;width:16px;height:15px;background:linear-gradient(#4a78b8,#2a5292);border:1px solid #0e2a5a"></div><div class="a" style="left:351px;top:358px;width:16px;height:15px;background:linear-gradient(#4a78b8,#2a5292);border:1px solid #0e2a5a"></div><div class="a" style="left:375px;top:358px;width:16px;height:15px;background:linear-gradient(#4a78b8,#2a5292);border:1px solid #0e2a5a"></div><div class="a" style="left:391.5px;top:358px;width:16px;height:15px;background:linear-gradient(#4a78b8,#2a5292);border:1px solid #0e2a5a"></div><div class="a" style="left:414px;top:358px;width:16px;height:15px;background:linear-gradient(#4a78b8,#2a5292);border:1px solid #0e2a5a"></div><div class="a" style="left:430px;top:358px;width:16px;height:15px;background:linear-gradient(#4a78b8,#2a5292);border:1px solid #0e2a5a"></div><div class="t" style="left:29px;top:380px;font-size:8.5px;letter-spacing:-0.2px;color:#16282c">Filtering</div><div class="a" style="left:108px;top:377px;width:11.5px;height:13px;background:linear-gradient(#78a2d6,#4a74b4);border:1px solid #1d3d70;border-radius:3px"></div><div class="a" style="left:27px;top:392.5px;width:156px;height:6.5px;overflow:hidden"><div class="t" style="left:21px;top:-3.5px;font-size:9px;color:#16282c">Camera 1</div></div><div class="t" style="left:47px;top:402.5px;font-size:8.6px;color:#16282c;transform:scaleX(0.93);transform-origin:0 0">Light 1</div><div class="t" style="left:39.5px;top:414.8px;font-size:8.6px;color:#f4f8f8;transform:scaleX(0.93);transform-origin:0 0">Master Objects</div><div class="t" style="left:47px;top:427.5px;font-size:8.6px;color:#1e2410;transform:scaleX(0.93);transform-origin:0 0">cubesuv.obj</div><div class="t" style="left:39.5px;top:439.8px;font-size:8.6px;color:#f4f8f8;transform:scaleX(0.93);transform-origin:0 0">Master Shaders</div><div class="t" style="left:47px;top:452.5px;font-size:8.6px;color:#16282c;transform:scaleX(0.93);transform-origin:0 0">Default</div><div class="t" style="left:47px;top:465.0px;font-size:8.6px;color:#16282c;transform:scaleX(0.93);transform-origin:0 0">rusty_metal</div><div class="t" style="left:47px;top:477.5px;font-size:8.6px;color:#16282c;transform:scaleX(0.93);transform-origin:0 0">shiney_metal</div><div class="t" style="left:39.5px;top:489.8px;font-size:8.6px;color:#f4f8f8;transform:scaleX(0.93);transform-origin:0 0">Master Clips</div><div class="t" style="left:39.5px;top:502.3px;font-size:8.6px;color:#f4f8f8;transform:scaleX(0.93);transform-origin:0 0">Scene Effects</div><div class="t" style="left:47px;top:515.0px;font-size:8.6px;color:#16282c;transform:scaleX(0.93);transform-origin:0 0">Scene Effects</div><div class="t" style="left:39.5px;top:527.3px;font-size:8.6px;color:#f4f8f8;transform:scaleX(0.93);transform-origin:0 0">Soundtrack</div><div class="t" style="left:48px;top:548px;font-size:8.5px;color:#1a2e32">Channel 1</div><div class="a" style="left:36px;top:572.5px;width:53px;height:5px;background:linear-gradient(#7aa4d8,#4a74b4);border:1px solid #1d3d70;border-radius:3px 3px 0 0"></div><div class="t" style="left:283px;top:376px;font-size:10px;color:#eef6f6">1s</div><div class="t" style="left:377px;top:376px;font-size:10px;color:#eef6f6">2s</div><div class="t" style="left:471px;top:376px;font-size:10px;color:#eef6f6">3s</div><div class="t" style="left:190px;top:376.5px;font-size:9.5px;color:#d8ecf0;opacity:0.85">0s</div><div class="a" style="left:514.5px;top:426px;width:6.5px;height:135px;background:linear-gradient(90deg,#8ab2e2,#4a74b4 60%,#3a62a0);border:1px solid #1d3d70;border-radius:3px"></div><div class="a" style="left:195.5px;top:572.5px;width:138px;height:5px;background:linear-gradient(#7aa4d8,#4a74b4);border:1px solid #1d3d70;border-radius:3px 3px 0 0"></div><div class="t" style="left:605px;top:43.5px;font-size:8.2px;color:#e4f0f2">cubesuv.obj : Master Object</div><div class="a" style="left:783px;top:39px;width:14px;height:14px;background:linear-gradient(#7aa4d8,#3e68a8);border:1px solid #163868;border-radius:2px"></div><div class="t" style="left:541px;top:66.5px;font-size:8.5px;color:#1a3036">General</div><div class="t" style="left:549px;top:77.5px;font-size:9px;color:#f4f8f8">General</div><div class="t" style="left:540px;top:94px;font-size:8.5px;color:#16282c">Name:</div><div class="t" style="left:596px;top:94.5px;font-size:8.6px;color:#000">cubesuv.obj</div><div class="t" style="left:605px;top:109.5px;font-size:8.5px;color:#16282c">Instances</div><div class="t" style="left:540px;top:121px;font-size:8.5px;color:#16282c">cubesuv.obj</div><div class="a" style="left:701px;top:128.5px;width:7.5px;height:21.5px;background:linear-gradient(90deg,#8ab2e2,#4a74b4 60%,#3a62a0);border:1px solid #1d3d70;border-radius:3px"></div><div class="a" style="left:791px;top:84px;width:7px;height:179px;background:linear-gradient(90deg,#8ab2e2,#4a74b4 60%,#3a62a0);border:1px solid #1d3d70;border-radius:3px"></div><div class="a" style="left:650px;top:298px;width:38px;height:8px;background:linear-gradient(#7aa4d8,#3e68a8);border:1px solid #163868;border-radius:4px"></div><div class="a" style="left:664px;top:301px;width:9px;height:2.5px;border:1px solid #e0eaf4;border-radius:2px"></div><div class="t" style="left:582.5px;top:315.5px;font-size:8.6px;color:#eef6f6">Objects</div><div class="t" style="left:625.0px;top:315.5px;font-size:8.6px;color:#eef6f6">Shaders</div><div class="t" style="left:667.5px;top:315.5px;font-size:8.6px;color:#eef6f6">Sounds</div><div class="t" style="left:710.0px;top:315.5px;font-size:8.6px;color:#eef6f6">Clips</div><div class="t" style="left:539.5px;top:316px;font-size:8.4px;color:#16282c">Instances</div><div class="t" style="left:561px;top:334.5px;font-size:8px;color:#16282c">Find:</div><div class="a" style="left:731px;top:330.5px;width:62px;height:13px;background:linear-gradient(#78a2d6,#4a74b4);border:1px solid #1d3d70;border-radius:3px;box-shadow:1px 1px 0 #5a8a92"></div><div class="t" style="left:734px;top:333.5px;font-size:9px;color:#0e1e30">All</div><div class="t" style="left:540px;top:350px;font-size:11.5px;color:#16282c">Scene</div><div class="t" style="left:549px;top:364.5px;font-size:8.5px;color:#16282c">cubesuv.obj</div><div class="t" style="left:549px;top:377.0px;font-size:8.5px;color:#16282c">Camera 1</div><div class="t" style="left:549px;top:389.5px;font-size:8.5px;color:#16282c">Light 1</div>
<svg width="800" height="577" viewBox="0 0 800 577"><g fill="#f4f8ff"><rect x="62" y="340" width="1.6" height="7"/><path d="M68.5 340v7l-4.5-3.5z"/><path d="M76 340v7l-4-3.5zM80.5 340v7l-4.5-3.5z"/><rect x="89" y="340.5" width="6" height="6"/><path d="M103 340v7l4.5-3.5z"/><path d="M114 340v7l4.5-3.5zM118.5 340v7l4.5-3.5z"/><path d="M128 340v7l4.5-3.5z"/><rect x="133.5" y="340" width="1.6" height="7"/><path d="M148.5 341h7v5h-7z" fill="none" stroke="#f4f8ff" stroke-width="1.2"/><rect x="150" y="339" width="4" height="2"/><path d="M174.5 340v7l-4-3.5z"/><circle cx="183" cy="343.5" r="2" fill="none" stroke="#f4f8ff" stroke-width="1"/><path d="M185 343.5h6v2M189 343.5v2" fill="none" stroke="#f4f8ff" stroke-width="1"/><path d="M194 340h8M196 341h4v6h-4z" fill="none" stroke="#f4f8ff" stroke-width="1"/><path d="M210 340v7l4.5-3.5z"/></g><path d="M232 345l3.5-5 3.5 5z" fill="#f4f8ff" stroke="#234" stroke-width="0.4"/><path d="M464 340l2 2 2-2M464 343l2 2 2-2" stroke="#0e1e30" stroke-width="0.9" fill="none"/><path d="M512.5 340l2 2 2-2M512.5 343l2 2 2-2" stroke="#0e1e30" stroke-width="0.9" fill="none"/><path d="M87 362.5l2 2 2-2M87 365.5l2 2 2-2" stroke="#0e1e30" stroke-width="0.9" fill="none"/><g fill="none" stroke="#f4f8ff" stroke-width="1"><rect x="190" y="361" width="9" height="8"/><path d="M191 368l3-3 2 2 3-4"/><rect x="208" y="361" width="7" height="6"/><path d="M206 368h12M211 367v3"/></g><path d="M240 362.5l2 2 2-2M240 365.5l2 2 2-2" stroke="#0e1e30" stroke-width="0.9" fill="none"/><path d="M255.5 364.5l2 3 4-7" stroke="#0a1a1e" stroke-width="1.3" fill="none"/><g fill="none" stroke="#f4f8ff" stroke-width="1.2"><path d="M321 370c3-1 4-6 7-7s3-1 4-2"/><path d="M337 370l5.5-9 5.5 9"/><path d="M354 370c0-5 2-8 4.5-8s4.5 3 4.5 8"/><path d="M378 370c1-4 3-8 5-8l6 8"/><path d="M394 370l4-8c3 0 4 4 5 8"/><path d="M417 370c0-3 2-6 4.5-6s4.5 3 4.5 6M419 362h5"/><path d="M433 370c0-3 2-6 4.5-6s4.5 3 4.5 6M433 362c1-2 8-2 9 0"/></g><path d="M111.5 380.5l2 2 2-2M111.5 383.5l2 2 2-2" stroke="#0e1e30" stroke-width="0.9" fill="none"/><path d="M187 374.5h15l-7.5 6.5z" fill="#41648e" stroke="#163050" stroke-width="0.6" opacity="0.9"/><path d="M786 46l4.5-4v2.5h4.5v3h-4.5v2.5z" fill="#000"/><path d="M786 334l2 2 2-2M786 337l2 2 2-2" stroke="#0e1e30" stroke-width="0.9" fill="none"/></svg>
</body></html>
